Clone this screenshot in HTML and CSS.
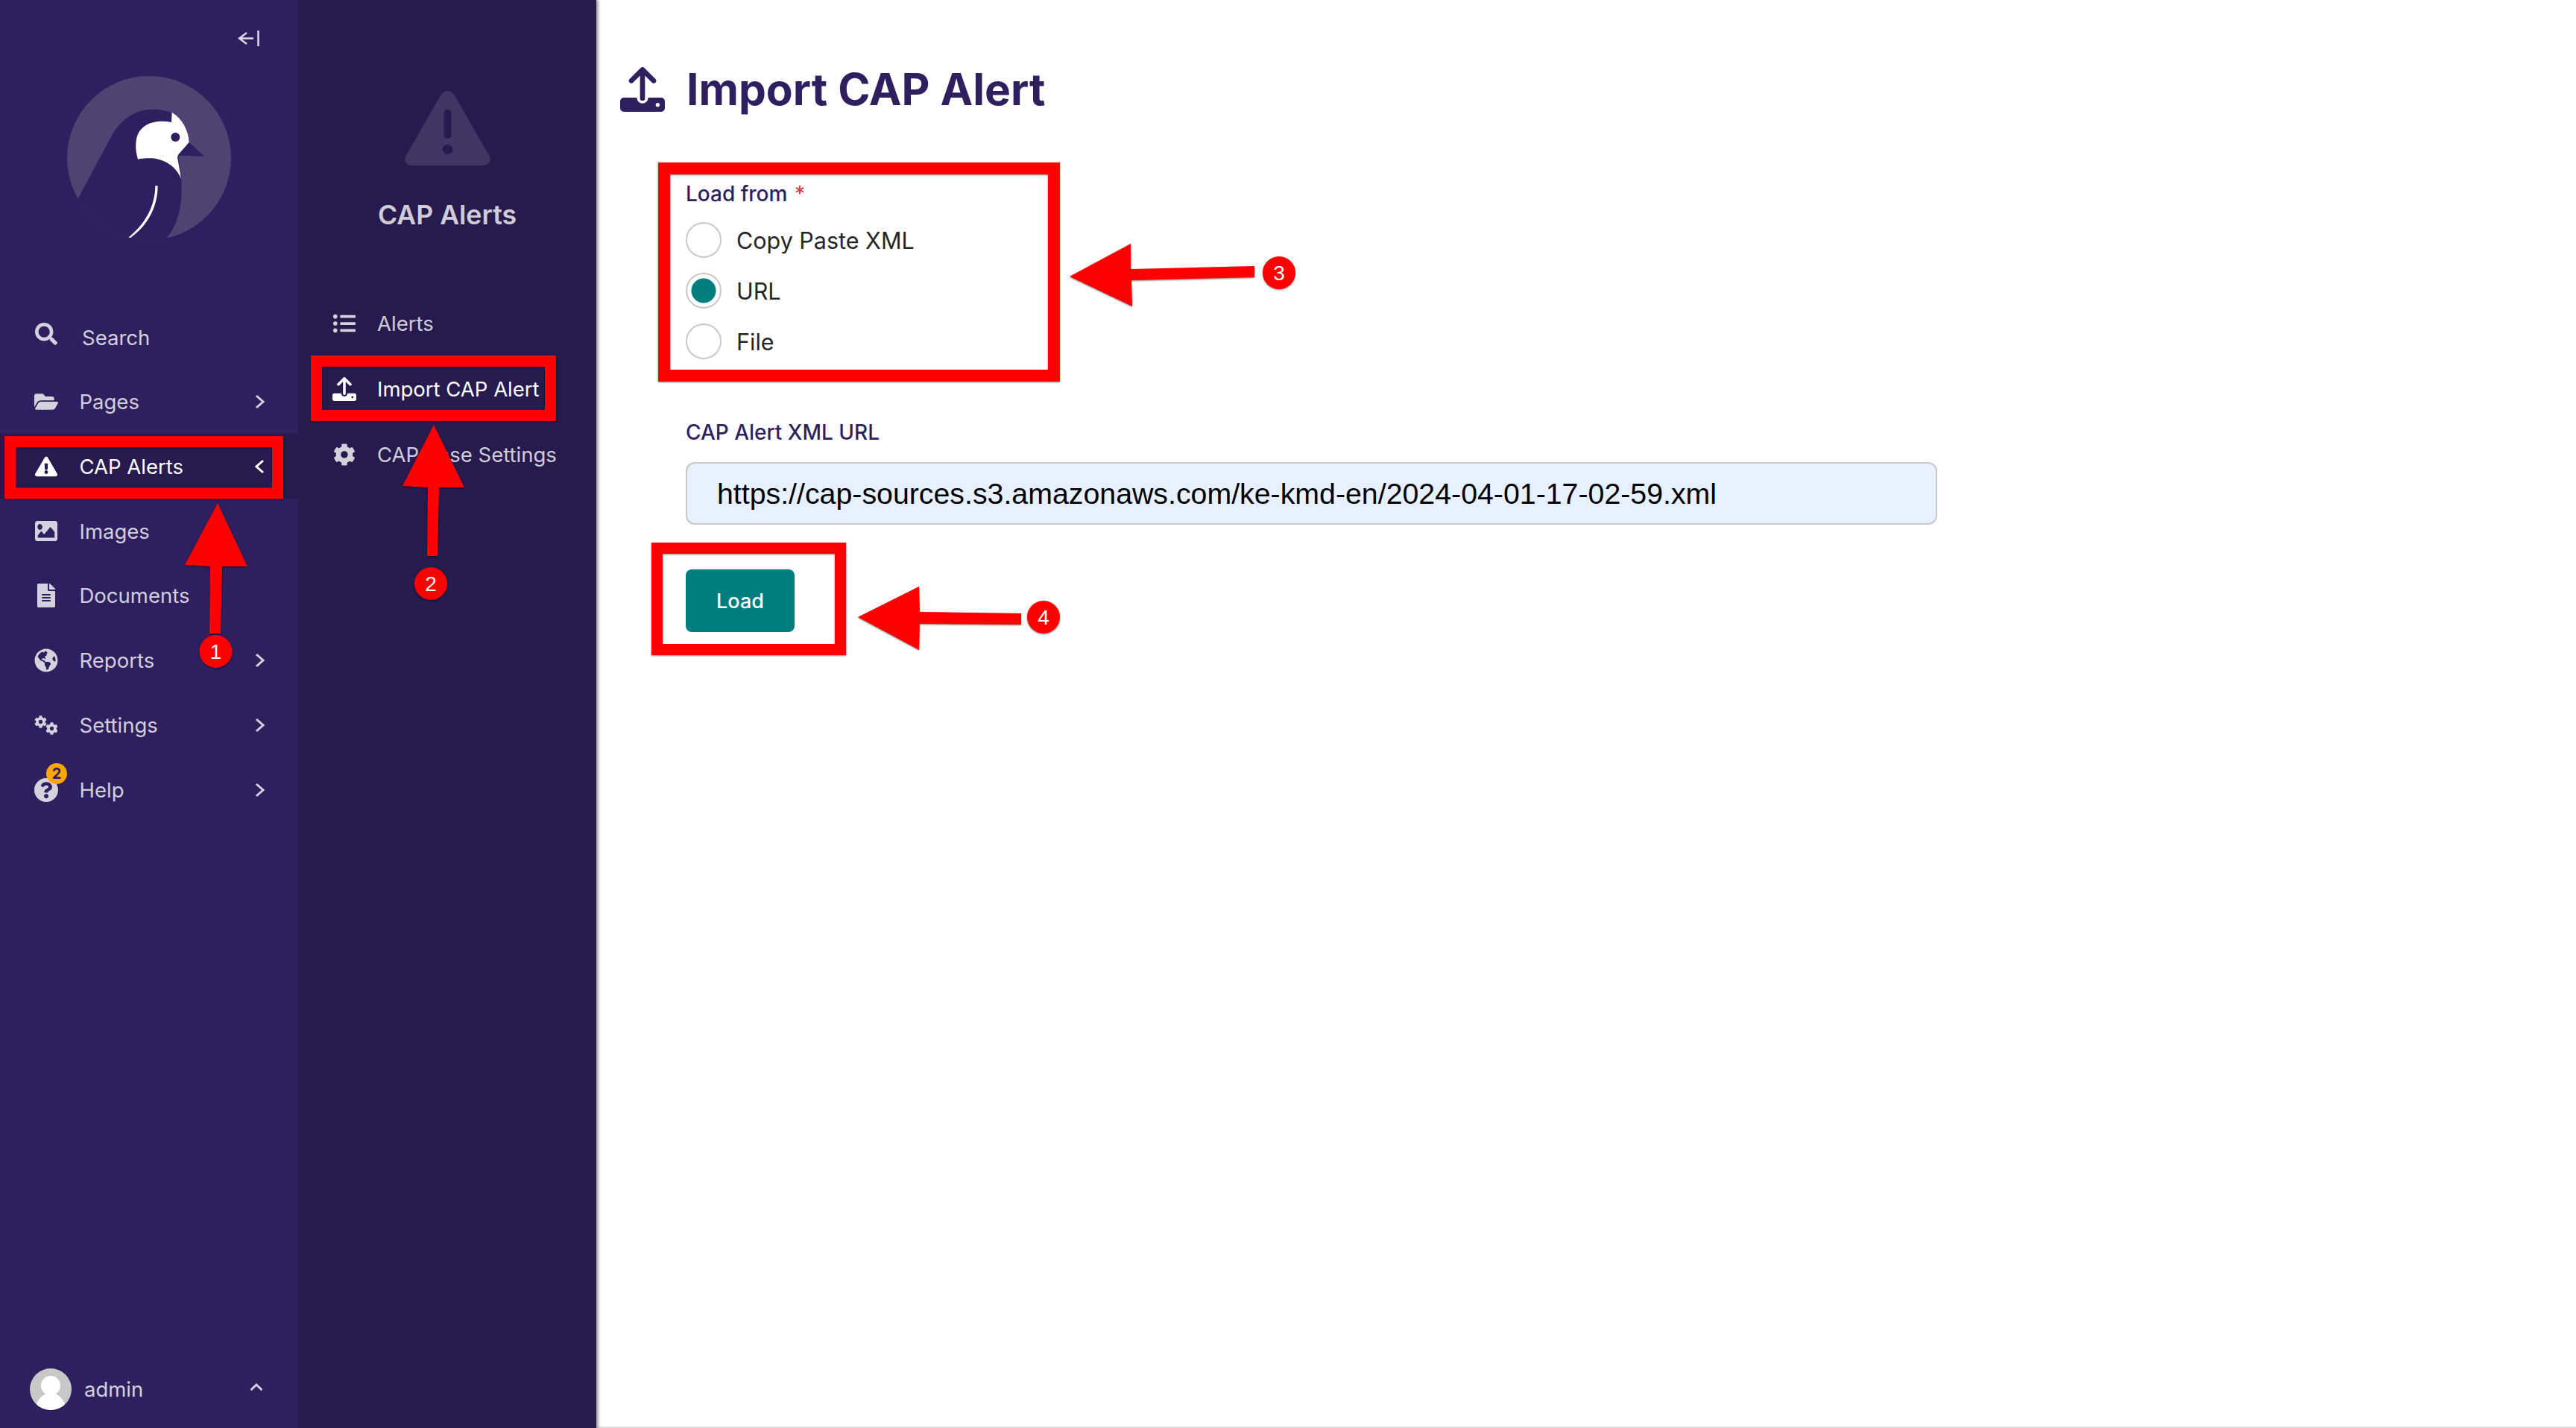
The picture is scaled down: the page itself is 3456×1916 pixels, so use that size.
FILE: index.html
```html
<!DOCTYPE html>
<html lang="en">
<head>
    <meta charset="UTF-8">
    <meta name="viewport" content="width=device-width, initial-scale=1.0">
    <title>Import CAP Alert</title>
    <link rel="stylesheet" href="styles.css">
</head>
<body>
    <svg class="defs">
        <symbol id="i-search" viewBox="0 0 512 512"><path d="M505 442.7L405.3 343c-4.5-4.5-10.6-7-17-7H372c27.6-35.3 44-79.7 44-128C416 93.1 322.9 0 208 0S0 93.1 0 208s93.1 208 208 208c48.3 0 92.7-16.4 128-44v16.3c0 6.4 2.5 12.5 7 17l99.7 99.7c9.4 9.4 24.6 9.4 33.9 0l28.3-28.3c9.4-9.4 9.4-24.6.1-34zM208 336c-70.7 0-128-57.2-128-128 0-70.7 57.2-128 128-128 70.7 0 128 57.2 128 128 0 70.7-57.2 128-128 128z"/></symbol>
        <symbol id="i-folder" viewBox="0 0 576 512"><path d="M572.694 292.093L500.27 416.248A63.997 63.997 0 0 1 444.989 448H45.025c-18.523 0-30.064-20.093-20.731-36.093l72.424-124.155A64 64 0 0 1 152 256h399.964c18.523 0 30.064 20.093 20.73 36.093zM152 224h328v-48c0-26.51-21.49-48-48-48H272l-64-64H48C21.49 64 0 85.49 0 112v278.046l69.077-118.418C86.214 242.25 117.989 224 152 224z"/></symbol>
        <symbol id="i-warning" viewBox="0 0 576 512"><path d="M569.517 440.013C587.975 472.007 564.806 512 527.94 512H48.054c-36.937 0-59.999-40.055-41.577-71.987L246.423 23.985c18.467-32.009 64.72-31.951 83.154 0l239.94 416.028zM288 354c-25.405 0-46 20.595-46 46s20.595 46 46 46 46-20.595 46-46-20.595-46-46-46zm-43.673-165.346l7.418 136c.347 6.364 5.609 11.346 11.982 11.346h48.546c6.373 0 11.635-4.982 11.982-11.346l7.418-136c.375-6.874-5.098-12.654-11.982-12.654h-63.383c-6.884 0-12.356 5.78-11.981 12.654z"/></symbol>
        <symbol id="i-image" viewBox="0 64 512 384" preserveAspectRatio="none"><path d="M464 448H48c-26.51 0-48-21.49-48-48V112c0-26.51 21.49-48 48-48h416c26.51 0 48 21.49 48 48v288c0 26.51-21.49 48-48 48zM112 120c-30.928 0-56 25.072-56 56s25.072 56 56 56 56-25.072 56-56-25.072-56-56-56zM64 384h384V272l-87.515-87.515c-4.686-4.686-12.284-4.686-16.971 0L208 320l-55.515-55.515c-4.686-4.686-12.284-4.686-16.971 0L64 336v48z"/></symbol>
        <symbol id="i-file" viewBox="0 0 384 512"><path d="M224 136V0H24C10.7 0 0 10.7 0 24v464c0 13.3 10.7 24 24 24h336c13.3 0 24-10.7 24-24V160H248c-13.2 0-24-10.8-24-24zm64 236c0 6.6-5.4 12-12 12H108c-6.6 0-12-5.4-12-12v-8c0-6.6 5.4-12 12-12h168c6.6 0 12 5.4 12 12v8zm0-64c0 6.6-5.4 12-12 12H108c-6.6 0-12-5.4-12-12v-8c0-6.6 5.4-12 12-12h168c6.6 0 12 5.4 12 12v8zm0-72v8c0 6.6-5.4 12-12 12H108c-6.6 0-12-5.4-12-12v-8c0-6.6 5.4-12 12-12h168c6.6 0 12 5.4 12 12zm96-114.1v6.1H256V0h6.1c6.4 0 12.5 2.5 17 7l97.9 98c4.5 4.5 7 10.6 7 16.9z"/></symbol>
        <symbol id="i-globe" viewBox="0 0 496 512"><path d="M248 8C111.03 8 0 119.03 0 256s111.03 248 248 248 248-111.03 248-248S384.97 8 248 8zm82.29 357.6c-3.9 3.88-7.99 7.95-11.31 11.28-2.99 3-5.1 6.7-6.17 10.71-1.51 5.66-2.73 11.38-4.77 16.87l-17.39 46.85c-13.76 3-28 4.69-42.65 4.69v-27.38c1.69-12.62-7.64-36.26-22.63-51.25-6-6-9.37-14.14-9.37-22.63v-32.01c0-11.64-6.27-22.34-16.46-27.97-14.37-7.95-34.81-19.06-48.81-26.11-11.48-5.78-22.1-13.14-31.65-21.75l-.8-.72a114.792 114.792 0 0 1-18.06-20.74c-9.38-13.77-24.66-36.42-34.59-51.14 20.47-45.5 57.36-82.04 103.2-101.89l24.01 12.01C203.48 89.74 216 82.01 216 70.11v-11.3c7.99-1.29 16.12-2.11 24.45-2.42l28.3 28.3c6.25 6.25 6.25 16.38 0 22.63L264 112l-10.34 10.34c-3.12 3.12-3.12 8.19 0 11.31l4.69 4.69c3.12 3.12 3.12 8.19 0 11.31l-8 8a8.008 8.008 0 0 1-5.66 2.34h-8.99c-2.08 0-4.08.81-5.58 2.27l-9.92 9.65a8.008 8.008 0 0 0-1.58 9.31l15.59 31.19c2.66 5.32-1.21 11.58-7.15 11.58h-5.64c-1.93 0-3.79-.7-5.24-1.96l-9.28-8.06a16.017 16.017 0 0 0-15.55-3.1l-31.17 10.39a11.95 11.95 0 0 0-8.17 11.34c0 4.53 2.56 8.66 6.61 10.69l11.08 5.54c9.41 4.71 19.79 7.16 30.31 7.16s22.59 27.29 32 32h66.75c8.49 0 16.62 3.37 22.63 9.37l13.69 13.69a30.503 30.503 0 0 1 8.93 21.57 46.536 46.536 0 0 1-13.72 32.98zM417 274.25c-5.79-1.45-10.84-5-14.15-9.97l-17.98-26.97a23.97 23.97 0 0 1 0-26.62l19.59-29.38c2.32-3.47 5.5-6.29 9.24-8.15l12.98-6.49C440.2 193.59 448 223.87 448 256c0 8.67-.74 17.16-1.82 25.54L417 274.25z"/></symbol>
        <symbol id="i-cog" viewBox="0 0 512 512"><path d="M487.4 315.7l-42.6-24.6c4.3-23.2 4.3-47 0-70.2l42.6-24.6c4.9-2.8 7.1-8.6 5.5-14-11.1-35.6-30-67.8-54.7-94.6-3.8-4.1-10-5.1-14.8-2.3L380.8 110c-17.9-15.4-38.5-27.3-60.8-35.1V25.8c0-5.6-3.9-10.5-9.4-11.7-36.7-8.2-74.3-7.8-109.2 0-5.5 1.2-9.4 6.1-9.4 11.7V75c-22.2 7.9-42.8 19.8-60.8 35.1L88.7 85.5c-4.9-2.8-11-1.9-14.8 2.3-24.7 26.7-43.6 58.9-54.7 94.6-1.7 5.4.6 11.2 5.5 14L67.3 221c-4.3 23.2-4.3 47 0 70.2l-42.6 24.6c-4.9 2.8-7.1 8.6-5.5 14 11.1 35.6 30 67.8 54.7 94.6 3.8 4.1 10 5.1 14.8 2.3l42.6-24.6c17.9 15.4 38.5 27.3 60.8 35.1v49.2c0 5.6 3.9 10.5 9.4 11.7 36.7 8.2 74.3 7.8 109.2 0 5.5-1.2 9.4-6.1 9.4-11.7v-49.2c22.2-7.9 42.8-19.8 60.8-35.1l42.6 24.6c4.9 2.8 11 1.9 14.8-2.3 24.7-26.7 43.6-58.9 54.7-94.6 1.5-5.5-.7-11.3-5.6-14.1zM256 336c-44.1 0-80-35.9-80-80s35.9-80 80-80 80 35.9 80 80-35.9 80-80 80z"/></symbol>
        <symbol id="i-cogs" viewBox="0 0 32 26">
            <use href="#i-cog" x="0" y="0" width="17" height="17"/>
            <use href="#i-cog" x="15" y="9" width="17" height="17"/>
        </symbol>
        <symbol id="i-help" viewBox="0 0 496 496"><path d="M496 248c0 136.997-111.043 248-248 248S0 384.997 0 248C0 111.083 111.043 0 248 0s248 111.083 248 248zM254.655 82c-54.497 0-89.255 22.957-116.549 63.758-3.536 5.286-2.353 12.415 2.715 16.258l34.699 26.31c5.205 3.947 12.621 3.008 16.665-2.122 17.864-22.658 30.113-35.797 57.303-35.797 20.429 0 45.698 13.148 45.698 32.958 0 14.976-12.363 22.667-32.534 33.976C239.128 230.528 208 246.941 208 288v4c0 6.627 5.373 12 12 12h56c6.627 0 12-5.373 12-12v-1.333c0-28.462 83.186-29.647 83.186-106.667 0-58.002-60.165-102-116.531-102zM248 330c-25.365 0-46 20.635-46 46 0 25.364 20.635 46 46 46s46-20.636 46-46c0-25.365-20.635-46-46-46z"/></symbol>
        <symbol id="i-list" viewBox="0 0 512 512"><path d="M48 48a48 48 0 1 0 48 48 48 48 0 0 0-48-48zm0 160a48 48 0 1 0 48 48 48 48 0 0 0-48-48zm0 160a48 48 0 1 0 48 48 48 48 0 0 0-48-48zm448 16H176a16 16 0 0 0-16 16v32a16 16 0 0 0 16 16h320a16 16 0 0 0 16-16v-32a16 16 0 0 0-16-16zm0-320H176a16 16 0 0 0-16 16v32a16 16 0 0 0 16 16h320a16 16 0 0 0 16-16V80a16 16 0 0 0-16-16zm0 160H176a16 16 0 0 0-16 16v32a16 16 0 0 0 16 16h320a16 16 0 0 0 16-16v-32a16 16 0 0 0-16-16z"/></symbol>
        <symbol id="i-upload" viewBox="30 30 180 180">
            <path fill-rule="evenodd" d="M45 153H97A23 23 0 0 0 143 153H195A15 15 0 0 1 210 168V195A15 15 0 0 1 195 210H45A15 15 0 0 1 30 195V168A15 15 0 0 1 45 153ZM181 174A8 8 0 1 0 181 190A8 8 0 1 0 181 174Z"/>
            <path class="upload-arrow" d="M120 155V42M75 85L120 40L165 85"/>
        </symbol>
        <symbol id="i-right" viewBox="0 0 13 20"><path class="chev" d="M2 2L11 10L2 18"/></symbol>
        <symbol id="i-left" viewBox="0 0 13 20"><path class="chev" d="M11 2L2 10L11 18"/></symbol>
    </svg>

    <div class="app">
        <aside class="sidebar">
            <div class="collapse">
                <svg class="collapse-icon" viewBox="0 0 29 21"><path d="M12 3L2 10.5L12 18M2 10.5H21M27.5 0V21"/></svg>
            </div>
            <a class="logo" href="#">
                <svg viewBox="30 36 660 660" class="logo-svg">
                    <defs><clipPath id="logo-clip"><circle cx="360" cy="366" r="330"/></clipPath></defs>
                    <circle cx="360" cy="366" r="330" fill="#504272"/>
                    <path clip-path="url(#logo-clip)" fill="#2e1f5e" d="M75 527L205 285C240 215 300 170 375 170C400 170 430 175 455 185L522 300L478 357L490 455C495 550 480 630 430 690L400 710H60Z"/>
                    <path fill="#fff" d="M452 183C490 205 518 250 521 303L478 352L474 362L489 450C470 400 420 370 370 367C350 366 330 368 315 371C305 335 303 300 315 270C335 230 380 210 450 222Z"/>
                    <circle cx="466" cy="282" r="18" fill="#2e1f5e"/>
                    <path fill="#2e1f5e" d="M521 303L582 359L478 356Z"/>
                    <path fill="#fff" d="M385 478H395C394 570 350 640 287 686H277C340 635 384 565 385 478Z"/>
                </svg>
            </a>
            <nav class="nav">
                <a class="nav-item nav-search" href="#">
                    <svg class="nav-icon search-icon"><use href="#i-search"/></svg>
                    <span class="nav-label">Search</span>
                </a>
                <a class="nav-item" href="#">
                    <svg class="nav-icon"><use href="#i-folder"/></svg>
                    <span class="nav-label">Pages</span>
                    <svg class="chevron"><use href="#i-right"/></svg>
                </a>
                <a class="nav-item active" href="#">
                    <svg class="nav-icon small-icon"><use href="#i-warning"/></svg>
                    <span class="nav-label">CAP Alerts</span>
                    <svg class="chevron"><use href="#i-left"/></svg>
                </a>
                <a class="nav-item" href="#">
                    <svg class="nav-icon image-icon"><use href="#i-image"/></svg>
                    <span class="nav-label">Images</span>
                </a>
                <a class="nav-item" href="#">
                    <svg class="nav-icon"><use href="#i-file"/></svg>
                    <span class="nav-label">Documents</span>
                </a>
                <a class="nav-item" href="#">
                    <svg class="nav-icon"><use href="#i-globe"/></svg>
                    <span class="nav-label">Reports</span>
                    <svg class="chevron"><use href="#i-right"/></svg>
                </a>
                <a class="nav-item" href="#">
                    <svg class="nav-icon"><use href="#i-cogs"/></svg>
                    <span class="nav-label">Settings</span>
                    <svg class="chevron"><use href="#i-right"/></svg>
                </a>
                <a class="nav-item" href="#">
                    <span class="help-wrap">
                        <svg class="nav-icon"><use href="#i-help"/></svg>
                        <span class="help-badge">2</span>
                    </span>
                    <span class="nav-label">Help</span>
                    <svg class="chevron"><use href="#i-right"/></svg>
                </a>
            </nav>
            <div class="account">
                <svg class="avatar" viewBox="0 0 56 56">
                    <defs><clipPath id="avatar-clip"><circle cx="28" cy="28" r="28"/></clipPath></defs>
                    <circle cx="28" cy="28" r="28" fill="#c8c8c8"/>
                    <circle cx="28" cy="23" r="13" fill="#fff"/>
                    <ellipse cx="28" cy="56" rx="20" ry="23" fill="#fff" clip-path="url(#avatar-clip)"/>
                </svg>
                <span class="account-name">admin</span>
                <svg class="chevron-up" viewBox="0 0 18 10"><path d="M1.5 9L9 2L16.5 9"/></svg>
            </div>
        </aside>

        <aside class="subpanel">
            <svg class="subpanel-icon" viewBox="-1 0 117 100"><path fill-rule="evenodd" d="M48.600 5C51 1.500 54 0 57.500 0C61 0 64 1.500 66.400 5L114 88C116.500 94 113 100 106 100H9C2 100 -1.500 94 1 88ZM57.500 25A5 5 0 0 0 52.500 30V59A5 5 0 0 0 62.500 59V30A5 5 0 0 0 57.500 25ZM57.500 72A7 6.500 0 1 0 57.500 85A7 6.500 0 1 0 57.500 72Z"/></svg>
            <h2 class="subpanel-title">CAP Alerts</h2>
            <ul class="submenu">
                <li><a class="sub-item" href="#"><svg class="sub-icon list-icon"><use href="#i-list"/></svg>Alerts</a></li>
                <li><a class="sub-item current" href="#"><svg class="sub-icon"><use href="#i-upload"/></svg>Import CAP Alert</a></li>
                <li><a class="sub-item" href="#"><svg class="sub-icon cog-icon"><use href="#i-cog"/></svg>CAP Base Settings</a></li>
            </ul>
        </aside>

        <main class="main">
            <header class="page-head">
                <svg class="page-icon"><use href="#i-upload"/></svg>
                <h1 class="page-title">Import CAP Alert</h1>
            </header>
            <form class="form">
                <div class="field-radio">
                    <div class="field-label">Load from <span class="required">*</span></div>
                    <div class="radio-list">
                        <label class="radio"><input type="radio" name="load_from"> Copy Paste XML</label>
                        <label class="radio"><input type="radio" name="load_from" checked> URL</label>
                        <label class="radio"><input type="radio" name="load_from"> File</label>
                    </div>
                </div>
                <div class="field-url">
                    <div class="field-label">CAP Alert XML URL</div>
                    <div class="url-input">https://cap-sources.s3.amazonaws.com/ke-kmd-en/2024-04-01-17-02-59.xml</div>
                </div>
                <button class="load-btn" type="button">Load</button>
            </form>
        </main>
    </div>

    <!-- red tutorial marks drawn over the screenshot -->
    <svg class="marks" viewBox="0 0 3456 1916">
        <g class="mark-boxes">
            <rect x="13.5" y="592.5" width="359" height="69.5"/>
            <rect x="424.5" y="484.5" width="314" height="73"/>
            <rect class="wide" x="891" y="226" width="523" height="278"/>
            <rect x="881.5" y="735.5" width="246" height="136"/>
        </g>
        <g class="mark-arrows">
            <polygon points="292,675 332,760 298,760 296,850 281,850 282,760 248,758"/>
            <polygon points="582,570 623,654 589,654 587,746 573,746 574,654 540,652"/>
            <polygon points="1435,371 1517,327 1517,361 1683,357 1683,372 1518,376 1519,411"/>
            <polygon points="1151,828 1233,787 1234,821 1370,823 1370,838 1234,837 1233,872"/>
        </g>
        <g class="mark-dots">
            <circle cx="289.5" cy="874" r="22"/>
            <circle cx="578" cy="783" r="22"/>
            <circle cx="1716" cy="366" r="22"/>
            <circle cx="1400" cy="828" r="22"/>
        </g>
        <g class="mark-nums">
            <text x="289.5" y="884">1</text>
            <text x="578" y="793">2</text>
            <text x="1716" y="376">3</text>
            <text x="1400" y="838">4</text>
        </g>
    </svg>
</body>
</html>
```

FILE: styles.css
```css
*{
    margin: 0;
    padding: 0;
    box-sizing: border-box;
}
html,body{
    width: 100%;
    height: 100%;
    overflow: hidden;
    background-color: #fff;
}
body{
    position: relative;
    font-family: Inter, "Noto Sans", sans-serif;
    color: #2e1f5e;
}
a{
    color: inherit;
    text-decoration: none;
}
ul{
    list-style: none;
}
.defs{
    display: none;
}
.app{
    display: flex;
    height: 1916px;
}

/* main menu */
.sidebar{
    display: flex;
    flex-direction: column;
    flex: 0 0 400px;
    background-color: #2e1f5e;
    color: rgba(255,255,255,.8);
    font-size: 27.5px;
}
.collapse{
    display: flex;
    justify-content: flex-end;
    height: 102px;
    padding: 41px 52px 0 0;
}
.collapse-icon{
    width: 29px;
    height: 21px;
    fill: none;
    stroke: #dcd9e4;
    stroke-width: 2.5;
}
.logo{
    display: block;
    width: 220px;
    height: 220px;
    margin: 0 0 86.8px 90px;
}
.logo-svg{
    display: block;
    width: 220px;
    height: 220px;
}
.nav-item{
    display: flex;
    align-items: center;
    height: 86.8px;
    padding-left: 46px;
    padding-right: 45px;
}
.nav-item.active{
    background-color: #261a4e;
    color: #fff;
}
.nav-icon{
    flex: 0 0 32px;
    width: 32px;
    height: 32px;
    fill: currentColor;
}
.small-icon{
    padding: 0 1px;
}
.image-icon{
    flex-basis: 30px;
    width: 30px;
    height: 27px;
    margin: 0 1px 0 1px;
}
.nav-label{
    margin-left: 28.5px;
}
.nav-search .nav-label{
    margin-left: 32px;
    margin-top: 2px;
}
.search-icon{
    margin-top: -9px;
    padding: 0 1px;
}
.chevron{
    width: 13px;
    height: 20px;
    margin-left: auto;
}
.chev{
    fill: none;
    stroke: currentColor;
    stroke-width: 3;
}
.help-wrap{
    position: relative;
    display: flex;
}
.help-badge{
    position: absolute;
    left: 16px;
    top: -20px;
    width: 28px;
    height: 28px;
    border-radius: 50%;
    background-color: #ffa500;
    color: #2e1f5e;
    font-size: 20px;
    font-weight: 700;
    line-height: 28px;
    text-align: center;
}
.account{
    display: flex;
    align-items: center;
    margin-top: auto;
    padding: 0 47px 24px 40px;
}
.avatar{
    width: 56px;
    height: 56px;
}
.account-name{
    margin-left: 17px;
}
.chevron-up{
    width: 18px;
    height: 10px;
    margin: -6px 0 0 auto;
    fill: none;
    stroke: currentColor;
    stroke-width: 3;
}

/* second level menu */
.subpanel{
    flex: 0 0 400px;
    background-color: #261a4e;
    color: rgba(255,255,255,.8);
    box-shadow: 3px 0 3px rgba(0,0,0,.35);
    z-index: 1;
}
.subpanel-icon{
    display: block;
    width: 117px;
    height: 100px;
    margin: 122px 0 0 142px;
    fill: rgba(255,255,255,.12);
}
.subpanel-title{
    margin-top: 45px;
    font-size: 35.6px;
    font-weight: 600;
    line-height: 44px;
    text-align: center;
}
.submenu{
    margin-top: 79px;
}
.sub-item{
    display: flex;
    align-items: center;
    gap: 28px;
    height: 88px;
    padding-left: 46px;
    font-size: 27.5px;
    white-space: nowrap;
}
.sub-item.current{
    color: #fff;
}
.sub-icon{
    flex: 0 0 32px;
    width: 32px;
    height: 32px;
    fill: currentColor;
}
.list-icon,.cog-icon{
    padding: 0 1px;
}
.upload-arrow{
    fill: none;
    stroke: currentColor;
    stroke-width: 20;
    stroke-linecap: round;
    stroke-linejoin: round;
}

/* content */
.main{
    flex: 1;
    border-bottom: 2px solid #e0e0e0;
}
.page-head{
    display: flex;
    align-items: center;
    gap: 29px;
    padding: 88px 0 0 32px;
}
.page-icon{
    width: 60px;
    height: 60px;
    fill: #2e1f5e;
}
.page-title{
    font-size: 58.6px;
    font-weight: 700;
    line-height: 64px;
    color: #2e1f5e;
}
.form{
    margin: 0 0 0 120px;
}
.field-label{
    font-size: 28px;
    font-weight: 500;
    line-height: 36px;
}
.required{
    margin-left: 2px;
    color: #cd4444;
}
.field-radio{
    margin-top: 90px;
}
.radio-list{
    margin-top: 10px;
}
.radio{
    display: flex;
    align-items: center;
    gap: 20px;
    height: 68px;
    font-size: 30.5px;
    color: #262626;
}
.radio input{
    appearance: none;
    width: 48px;
    height: 48px;
    border: 2px solid #c8c8c8;
    border-radius: 50%;
    background-color: #fff;
}
.radio input:checked{
    background: radial-gradient(circle, #007d7e 0, #007d7e 16px, #fff 17px);
}
.field-url{
    margin-top: 70px;
}
.url-input{
    display: flex;
    align-items: center;
    width: 1679px;
    height: 84px;
    margin-top: 22px;
    padding-left: 40px;
    border: 2px solid #c8c8c8;
    border-radius: 12px;
    background-color: #e6f0fe;
    font-family: "Liberation Sans", Arial, sans-serif;
    font-size: 39.3px;
    color: #000;
}
.load-btn{
    display: block;
    width: 146px;
    height: 84px;
    margin-top: 60px;
    border: 0;
    border-radius: 8px;
    background-color: #007d7e;
    font-family: inherit;
    font-size: 27px;
    font-weight: 500;
    color: #fff;
}

/* tutorial marks */
.marks{
    position: absolute;
    left: 0;
    top: 0;
    width: 3456px;
    height: 1916px;
    pointer-events: none;
    z-index: 5;
}
.mark-boxes,.mark-arrows,.mark-dots{
    filter: drop-shadow(0 1px 1px rgba(0,0,0,.5));
}
.mark-boxes rect{
    fill: none;
    stroke: #fe0000;
    stroke-width: 15;
}
.mark-boxes .wide{
    stroke-width: 16;
}
.mark-arrows polygon,.mark-dots circle{
    fill: #fe0000;
}
.mark-nums text{
    font-family: "Liberation Sans", Arial, sans-serif;
    font-size: 28px;
    fill: #fff;
    text-anchor: middle;
}
```
